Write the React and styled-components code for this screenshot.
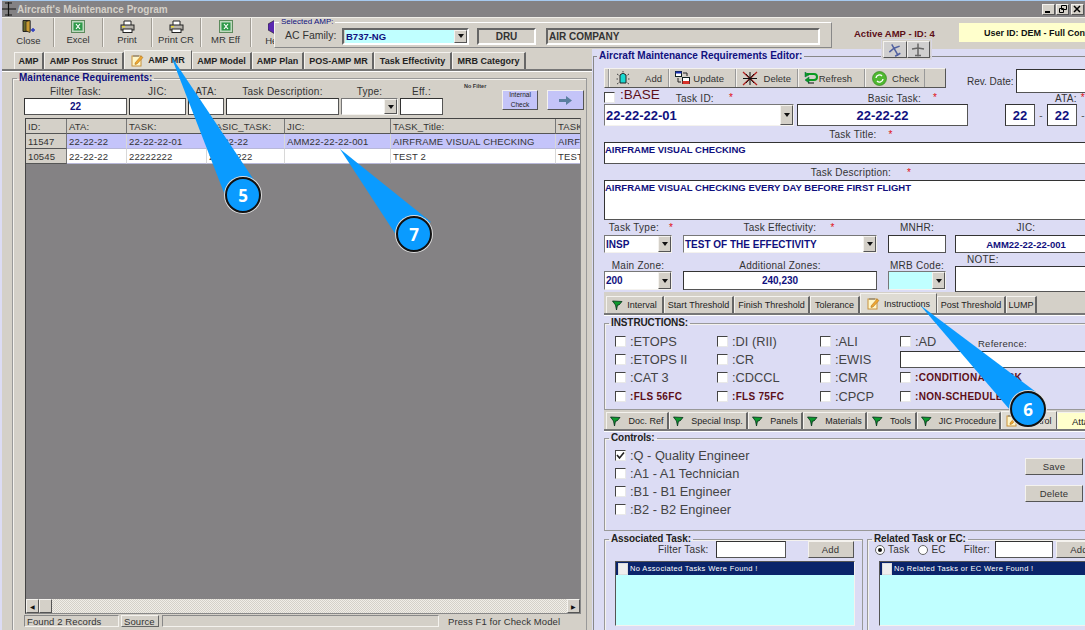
import React from "react";
import styled, { createGlobalStyle, css } from "styled-components";

const Global = createGlobalStyle`
  html, body { margin: 0; padding: 0; background: #d4d0c8; }
  * { box-sizing: border-box; }
  body { font-family: "Liberation Sans", Arial, sans-serif; font-size: 10px; color: #333; }
  fieldset { margin: 0; min-width: 0; }
  legend { padding: 0 2px; }
`;

const raised = css`
  border: 1px solid;
  border-color: #f4f2ee #555 #555 #f4f2ee;
`;
const NAVY = "#10107e";
const LAV = "#dcdcf4";
const MAROON = "#5c0f18";

const Screen = styled.div`
  position: relative; width: 1085px; height: 630px; overflow: hidden;
  background: #d4d0c8; border-left: 2px solid ${LAV};
`;
const TitleBar = styled.div`
  height: 17px; background: #848284; border-top: 1px solid #a6caf0;
  display: flex; align-items: center; padding: 0 0 0 1px; color: #d4d0c8;
  font-size: 10px; font-weight: bold; margin-left: -2px;
`;
const TitleText = styled.span` margin-left: 1px; flex: 1; `;
const WinBtn = styled.div`
  ${raised}; width: 13px; height: 11px; background: #d4d0c8; margin-right: 1.5px;
  display: flex; align-items: center; justify-content: center;
`;
const TopBar = styled.div`
  height: 32px; display: flex; border-top: 1px solid #f0eee8;
`;
const TopTools = styled.div` display: flex; padding-left: 2px; width: 272px; overflow: hidden; flex: none; `;
const ToolBtn = styled.div`
  flex: none; width: ${p => p.$w || 49}px; height: 29px; display: flex; flex-direction: column;
  align-items: center; justify-content: flex-start; padding-top: 2px; border-right: 1px solid #a09c94;
  box-shadow: 1px 0 0 #f4f2ee; font-size: 9.5px; color: #333; overflow: hidden;
  span { margin-top: 1px; white-space: nowrap; }
`;
const AmpGroup = styled.fieldset`
  width: 558px; height: 30px; margin-top: 0; flex: none; border: 1px solid #f4f2ee;
  border-top: 1px solid #fff; border-right: 1px solid #888; border-bottom: 1px solid #888;
  padding: 0 0 0 10px; display: flex; align-items: center; position: relative; 
  legend { color: ${NAVY}; font-size: 8px; line-height: 8px; margin-left: -6px; }
`;
const AmpLabel = styled.span` font-size: 10.5px; width: 57px; flex: none; margin-top: -3px; `;
const SunkenBox = styled.div`
  height: 17px; border: 2px solid; border-color: #666 #fff #fff #666; flex: none; margin-top:-1px;
  display: flex; align-items: center; font-size: 10px; font-weight: bold; color: #333;
  width: ${p => p.$w}px; margin-left: ${p => p.$ml || 0}px;
  justify-content: ${p => (p.$center ? "center" : "flex-start")}; padding-left: ${p => (p.$center ? 0 : 1)}px;
`;
const ComboValue = styled.div`
  flex: 1; height: 100%; background: ${p => p.$bg || "#fff"}; color: ${p => p.$c || NAVY};
  font-weight: bold; font-size: ${p => p.$fs || 10}px; display: flex; align-items: center; padding-left: 1px;
  white-space: nowrap; overflow: hidden;
`;
const DropBtn = styled.div`
  ${raised}; width: 13px; height: 100%; background: #d4d0c8; flex: none; position: relative;
  &::after { content: ""; position: absolute; left: 3px; top: 50%; margin-top: -2px;
    border: 3px solid transparent; border-top: 4px solid #111; border-bottom: 0; }
`;
const TopRight = styled.div`
  flex: 1; display: flex; align-items: center; padding-bottom: 1px; font-weight: bold;
`;
const ActiveAmp = styled.div` margin-left: 22px; width: 105px; color: ${MAROON}; font-size: 9.5px; white-space: nowrap; `;
const UserBox = styled.div`
  background: #ffffcc; height: 19px; width: 130px; display: flex; align-items: center; padding-left: 25px;
  white-space: nowrap; overflow: hidden; font-size: 9px; color: #111; margin-top:-1px;
`;
const Body = styled.div` display: flex; height: 581px; `;
const LeftPane = styled.div` width: 590px; flex: none; padding-top: 3px; overflow: hidden; `;
const RightPane = styled.div` flex: 1; background: ${LAV}; overflow: hidden; padding: 1px 0 0 1px; min-width: 0; `;
const TabStrip = styled.div`
  display: flex; align-items: flex-end; height: ${p => p.$h || 20}px; padding-left: ${p => p.$pl || 0}px;
  border-bottom: 2px solid #777; box-shadow: 0 1px 0 #fff; width: ${p => p.$w || "auto"};
  background: ${p => p.$bg || "transparent"}; white-space: nowrap;
`;
const Tab = styled.div`
  flex: none; width: ${p => p.$w}px; height: ${p => (p.$active ? p.$ah || 19 : 17)}px; background: ${p => (p.$active ? "#dedbd3" : "#d4d0c8")};
  border-right: 2px solid #666; border-left: 1px solid #f4f2ee; border-top: 1px solid #f4f2ee;
  display: flex; align-items: center; justify-content: center; gap: ${p => p.$gap || 4}px; overflow: hidden;
  font-size: ${p => p.$fs || 9.5}px; font-weight: ${p => (p.$bold ? "bold" : "normal")}; color: #222;
  ${p => p.$hl && css` background: #ffffcc; justify-content: flex-start; padding-left: 14px; border-right: 0;`}
  ${p => p.$active && css` border-right: 1px solid #666; `}
`;
const LeftGroup = styled.fieldset`
  margin: 1px 0 0 10px; width: 575px; height: 560px; border: 1px solid #999; box-shadow: inset 1px 1px 0 #f4f2ee;
  padding: 0 0 0 11px; border-bottom: 0;
  legend { color: ${NAVY}; font-weight: bold; font-size: 10px; line-height: 12px; margin-left: -7px; }
`;
const FilterRow = styled.div` display: flex; gap: 2px; position: relative; height: 31px; margin-top: 1px; `;
const Field = styled.div`
  display: flex; flex-direction: column; width: ${p => p.$w}px; flex: none; margin-left: ${p => p.$ml || 0}px;
  margin-top: ${p => p.$mt || 0}px;
`;
const Label = styled.div`
  height: ${p => p.$h || 13}px; display: flex; justify-content: center; align-items: center; gap: ${p => p.$gap || 10}px;
  font-size: 10px; letter-spacing: .25px; color: #333; white-space: nowrap; padding-left: ${p => p.$pl || 0}px;
  padding-top: ${p => p.$pt || 0}px; width: ${p => (p.$w ? `${p.$w}px` : "auto")};
`;
const NoteLabel = styled(Label)` justify-content: flex-start; padding-left: 12px; `;
const Star = styled.i` color: #e01010; font-style: normal; font-size: 10px; `;
const Input = styled.div`
  height: ${p => p.$h || 17}px; background: ${p => p.$bg || "#fff"}; border: 1px solid #333;
  border-right-color: #555; border-bottom-color: #555; color: ${NAVY};
  display: flex; align-items: ${p => (p.$top ? "flex-start" : "center")}; justify-content: ${p => (p.$left ? "flex-start" : "center")};
  font-weight: bold; font-size: ${p => p.$fs || 10}px; padding: ${p => (p.$left ? "1px 0" : "0")}; white-space: nowrap; overflow: hidden;
  width: ${p => (p.$w ? `${p.$w}px` : "auto")}; flex: none; margin-left: ${p => p.$ml || 0}px;
`;
const Combo = styled.div`
  height: ${p => p.$h || 18}px; display: flex; border: 1px solid; border-color: #777 #f4f2ee #f4f2ee #777;
`;
const TaskCombo = styled(Combo)` width: 190px; flex: none; height: 22px; `;
const SmallHint = styled.div` position: absolute; left: 440px; top: -2px; font-size: 5.5px; font-weight: bold; color: #333; `;
const LavBtn = styled.div`
  ${raised}; position: absolute; top: ${p => p.$t || 0}px; left: ${p => p.$l}px; width: ${p => p.$w}px; height: 20px; background: #c4c4f8;
  display: flex; align-items: center; justify-content: center; text-align: center; font-size: 6.5px; line-height: 10px; color: #222;
`;
const DataGrid = styled.div`
  margin: 2px 0 0 1px; width: 556px; height: 496px; border: 1px solid #888; background: #848284; display: flex; flex-direction: column; overflow: hidden;
  border-left: 1px solid #444; border-top: 1px solid #444;
`;
const COLS = "41px 60px 80px 78px 106px 165px 26px";
const GridRow = styled.div`
  display: grid; grid-template-columns: ${COLS}; height: 15px; flex: none; overflow: hidden;
`;
const Cell = styled.div`
  padding: 0 2px; display: flex; align-items: center; white-space: nowrap; overflow: hidden; font-size: 9.5px; letter-spacing: .15px; color: #333;
  background: ${p => (p.$head ? "#d4d0c8" : p.$sel ? "#c4c4fa" : "#fff")};
  border-right: 1px solid ${p => (p.$head ? "#777" : "#d8d8d8")}; border-bottom: 1px solid ${p => (p.$head ? "#555" : "#b8b8d8")};
`;
const Spacer = styled.div` flex: 1; `;
const HScroll = styled.div`
  height: 14px; background: repeating-conic-gradient(#d4d0c8 0 25%, #f0eee8 0 50%) 0 0 / 2px 2px; display: flex; justify-content: space-between; flex: none;
`;
const ScrollBtn = styled.div`
  ${raised}; width: ${p => p.$w || 13}px; height: 14px; background: #d4d0c8; display: flex; align-items: center; justify-content: center; font-size: 6px; color: #111;
`;
const ScrollLeft = styled.div` display: flex; `;
const StatusBar = styled.div` display: flex; height: 12px; margin-top: 1px; font-size: 9.5px; letter-spacing: .1px; align-items: stretch; `;
const StatusCell = styled.div`
  width: ${p => p.$w}px; margin-right: ${p => p.$mr || 2}px; display: flex; align-items: center; padding-left: 2px; white-space: nowrap; flex: none; 
  border: 1px solid; ${p => (p.$up ? "border-color: #f4f2ee #666 #666 #f4f2ee;" : p.$none ? "border-color: transparent;" : "border-color: #888 #f4f2ee #f4f2ee #888;")}
`;
const EditorGroup = styled.fieldset`
  width: 540px; border: 0; border-top: 1px solid #888; border-left: 1px solid #888; padding: 0; height: 580px;
  legend { color: ${NAVY}; font-weight: bold; font-size: 10px; line-height: 12px; margin-left: 3px; }
`;
const EditorBody = styled.div` padding-left: 10px; `;
const EditBar = styled.div` display: flex; height: 22px; margin-top: 6px; `;
const EditTools = styled.div`
  ${raised}; width: 342px; height: 20px; background: #d4d0c8; display: flex; align-items: center; font-size: 9.5px; color: #333; flex: none; padding-left: 3px;
`;
const EditTool = styled.div`
  flex: none; width: ${p => p.$w}px; margin-left: ${p => p.$ml || 0}px; height: 100%; display: flex; align-items: center; justify-content: space-between;
  padding: 0 ${p => p.$pr || 6}px 0 ${p => p.$pl || 6}px;
  border-left: 1px solid #999; box-shadow: inset 1px 0 0 #f4f2ee; 
  &:last-child { border-right: 1px solid #999; }
`;
const RevLabel = styled.div` margin-left: 21px; width: 49px; flex: none; padding-top: 8px; font-size: 10px; `;
const RevInput = styled(Input)` width: 90px; height: 24px; margin-top: 1px; `;
const BaseRow = styled.div` display: grid; grid-template-columns: 193px 171px 38px 80px; height: 14px; align-items: start; `;
const BaseCell = styled.div` display: flex; align-items: center; height: 14px; white-space: nowrap; `;
const CenteredCell = styled(BaseCell)` justify-content: center; padding-left: ${p => p.$pl || 0}px; `;
const Check = styled.div`
  width: 11px; height: 11px; flex: none; background: #fff; border: 1px solid; border-color: #444 #e8e8e8 #e8e8e8 #444;
  display: flex; align-items: center; justify-content: center; margin-right: ${p => p.$mr ?? 4}px;
`;
const BaseText = styled.span` color: ${MAROON}; font-size: 13.5px; margin-top: -5px; margin-left: 1px; `;
const Tl = styled.span` font-size: 10px; letter-spacing: .25px; color: #333; margin-left: ${p => p.$ml || 0}px; margin-top: ${p => p.$mt || 0}px;`;
const TaskRow = styled.div` display: flex; height: 22px; align-items: flex-start; `;
const Dash = styled.span` width: 12px; text-align: center; flex: none; color: #555; padding-top: 6px; `;
const FormGrid = styled.div` display: grid; grid-template-columns: 68px 194px 58px 140px; column-gap: 11px; `;
const WideField = styled(Field)` margin-left: -2px; width: 142px; `;
const Section = styled.fieldset`
  width: ${p => p.$w || 500}px; height: ${p => p.$h}px; margin-top: ${p => p.$mt || 0}px; border: 1px solid #999; box-shadow: inset 1px 1px 0 #f4f2ee; padding: 0;
  position: relative; flex: none;
  legend { font-weight: bold; font-size: 10px; line-height: 12px; letter-spacing: -.1px; color: #222; margin-left: 4px; }
`;
const CheckGrid = styled.div`
  display: grid; grid-template-columns: 102px 103px 80px 185px; grid-auto-rows: 18.4px; padding: 3px 0 0 10px; align-items: center;
`;
const CheckItem = styled.div`
  display: flex; align-items: center; white-space: nowrap; font-size: ${p => (p.$alert ? 10 : 12.8)}px; color: ${p => (p.$alert ? MAROON : "#444")};
  font-weight: ${p => (p.$alert ? "bold" : "normal")}; letter-spacing: ${p => (p.$alert ? ".3px" : "0")};
`;
const RefCell = styled.div` position: absolute; left: 295px; top: 9px; width: 190px; `;
const RefLabel = styled.div` margin-left: 78px; font-size: 9.5px; height: 13px; letter-spacing: .25px; `;
const ControlsBody = styled.div` display: flex; justify-content: space-between; width: 479px; padding: 2px 3px 0 10px; `;
const ControlsList = styled.div` display: flex; flex-direction: column; gap: 0; `;
const ControlItem = styled(CheckItem)` height: 18px; `;
const ControlBtns = styled.div` display: flex; flex-direction: column; gap: 10px; padding-top: 12px; margin-right: -2px; `;
const PlainBtn = styled.div`
  ${raised}; width: ${p => p.$w || 58}px; height: 17px; background: #d4d0c8; display: flex; align-items: center; justify-content: center; flex: none; font-size: 9.5px;
  margin-left: ${p => p.$ml || 0}px; letter-spacing: .2px;
`;
const BottomRow = styled.div` display: flex; gap: 4px; margin-top: 2px; `;
const AssocTop = styled.div` display: flex; align-items: center; height: 19px; padding-left: ${p => p.$pl || 0}px; margin: -5px 0 2px; `;
const ListBox = styled.div`
  margin: 0 0 0 ${p => p.$ml || 10}px; width: ${p => p.$w}px; height: 65px; background: #c0ffff; border: 1px solid; border-color: #555 #f4f2ee #f4f2ee #555; flex: none;
`;
const ListHead = styled.div`
  height: 13px; background: #0a246a; color: #fff; display: flex; align-items: center; font-size: 7.5px; letter-spacing: .35px; white-space: nowrap; 
`;
const ListCheck = styled(Check)` width: 10px; height: 12px; margin: 0 2px 0 2px; border-color: #ddd; background: #eee; `;
const Radio = styled.div`
  width: 10px; height: 10px; border-radius: 50%; border: 1px solid #666; background: #fff; flex: none; margin-right: 3px; margin-left: ${p => p.$ml || 0}px;
  display: flex; align-items: center; justify-content: center;
  &::after { content: ""; width: 4px; height: 4px; border-radius: 50%; background: ${p => (p.$on ? "#111" : "transparent")}; }
`;
const SmallText = styled.span` font-size: 10px; letter-spacing: .2px; margin-left: ${p => p.$ml || 0}px; color: #333; white-space: nowrap; `;
const FloatTools = styled.div`
  position: absolute; left: 879px; top: 39px; width: 51px; height: 21px; background: rgba(212,208,200,.72); border: 1px solid #d8d6e4; display: flex; padding: 1px;
`;
const FloatBtn = styled.div` ${raised}; flex: 1; display: flex; align-items: center; justify-content: center; background: #d0cfcf; `;
const TailLayer = styled.svg` position: absolute; left: -2px; top: 0; pointer-events: none; `;
const Badge = styled.div`
  position: absolute; left: ${p => p.$x - 18 - 2}px; top: ${p => p.$y - 18}px; width: 36px; height: 36px; border-radius: 50%;
  background: #0a9bff; border: 2px solid #111; box-shadow: 0 0 0 1px #ddd; color: #fff; font-size: 17px; font-weight: bold;
  font-family: "Open Sans", "Liberation Sans", sans-serif; display: flex; align-items: center; justify-content: center;
`;

const Flag = () => (
  <svg width="11" height="11" viewBox="0 0 11 11"><path d="M0.5 1 L10 1.5 L7 5 L5.5 5 L4.5 10 L3.5 5 Z" fill="#0d9a2e" stroke="#05301a" strokeWidth=".8" /></svg>
);
const Note = () => (
  <svg width="13" height="13" viewBox="0 0 13 13">
    <rect x="1" y="2" width="9" height="10" fill="#fff6c8" stroke="#c8923c" />
    <path d="M3 1v2M5 1v2M7 1v2" stroke="#777" />
    <path d="M4 9 L10 2 L12 3.5 L6 10 L4 10.5 Z" fill="#f0a830" stroke="#a06a20" strokeWidth=".5" />
  </svg>
);
const XlsIcon = () => (
  <svg width="14" height="13" viewBox="0 0 14 13">
    <rect x=".5" y=".5" width="13" height="12" fill="#bfd8bf" stroke="#5c8a5c" />
    <rect x="2.5" y="2.5" width="9" height="8" fill="#2f9a4a" />
    <path d="M5 4l4 5M9 4l-4 5" stroke="#fff" strokeWidth="1.2" />
  </svg>
);
const PrintIcon = () => (
  <svg width="15" height="13" viewBox="0 0 15 13">
    <path d="M4 5V1h7v4" fill="#fff" stroke="#222" />
    <rect x="1" y="5" width="13" height="5" fill="#b8b4ac" stroke="#222" />
    <rect x="3" y="9" width="9" height="3.5" fill="#fff" stroke="#222" />
    <rect x="2" y="6" width="3" height="1.5" fill="#e8d838" />
  </svg>
);
const DoorIcon = () => (
  <svg width="16" height="14" viewBox="0 0 16 14">
    <path d="M2 0.5h7v11H2z" fill="#6a6a2a" stroke="#222" />
    <path d="M5 1.5l4-1v12l-4-1.5z" fill="#c89a30" stroke="#222" strokeWidth=".7" />
    <path d="M10 10h4M12 8v4" stroke="#2a3ac0" strokeWidth="1.4" />
  </svg>
);
const Book = () => (
  <svg width="14" height="14" viewBox="0 0 14 14"><path d="M7 0l7 4v6l-7 4-7-4V4z" fill="#5a28b0" stroke="#222" strokeWidth=".6" /><rect x="6" y="2" width="3" height="3" fill="#f0d030" /></svg>
);
const AddIcon = () => (
  <svg width="16" height="15" viewBox="0 0 16 15">
    <path d="M5 4 L8 2 L11 4 V12 H5 Z" fill="#18d8d0" stroke="#222" />
    <path d="M2 3l1.5 1M14 3l-1.5 1M1.5 8H3M14.5 8H13M2 13l1.5-1M14 13l-1.5-1M8 0v1" stroke="#444" />
  </svg>
);
const UpdateIcon = () => (
  <svg width="16" height="14" viewBox="0 0 16 14">
    <rect x="0.5" y="0.5" width="6" height="5" fill="#fff" stroke="#122" />
    <rect x="0.5" y="0.5" width="6" height="2" fill="#1a30b0" />
    <rect x="7.5" y="6.5" width="7" height="6" fill="#fff" stroke="#122" />
    <rect x="7.5" y="10" width="7" height="3" fill="#d83028" />
    <path d="M8 2h4v3M3 7v4h3" fill="none" stroke="#222" />
  </svg>
);
const DeleteIcon = () => (
  <svg width="16" height="15" viewBox="0 0 16 15">
    <path d="M1 1l14 13M15 1L1 14" stroke="#b02020" strokeWidth="1.3" />
    <path d="M8 1v13M1 7.5h14M4 3l8 9M12 3l-8 9" stroke="#111" strokeWidth="1" />
  </svg>
);
const RefreshIcon = () => (
  <svg width="14" height="13" viewBox="0 0 14 13">
    <path d="M3 2h7q3 0 3 3t-3 3H5" fill="none" stroke="#0a9a20" strokeWidth="2" />
    <path d="M5 5v6L1 8z M1 0l4 3-4 2z" fill="#0a9a20" stroke="#064" strokeWidth=".5" />
    <path d="M4 11h6" stroke="#111" strokeWidth="1" />
  </svg>
);
const CheckIcon = () => (
  <svg width="15" height="15" viewBox="0 0 15 15">
    <circle cx="7.5" cy="7.5" r="7" fill="#50b830" stroke="#2a7a18" strokeWidth=".6" />
    <path d="M4 7a3.5 3.5 0 0 1 6-2M11 8a3.5 3.5 0 0 1-6 2" fill="none" stroke="#fff" strokeWidth="1.4" />
  </svg>
);
const PlaneIcon = ({ tilt }) => (
  <svg width="16" height="14" viewBox="0 0 16 14" style={{ transform: tilt ? "rotate(-30deg)" : "none" }}>
    <path d="M8 0.5v13M2 6l6-1 6 1M5 12.5h6" fill="none" stroke={tilt ? "#5060a0" : "#666"} strokeWidth="1.5" />
  </svg>
);
const Tick = () => (
  <svg width="9" height="9" viewBox="0 0 9 9"><path d="M1 4l2.5 3L8 1.5" fill="none" stroke="#222" strokeWidth="1.6" /></svg>
);
const ArrowIcon = () => (
  <svg width="14" height="9" viewBox="0 0 14 9"><path d="M0 3h7V0l6 4.5L7 9V6H0z" fill="#5a7f9f" /></svg>
);

const rows = [
  { sel: true, cells: ["11547", "22-22-22", "22-22-22-01", "22-22-22", "AMM22-22-22-001", "AIRFRAME VISUAL CHECKING", "AIRF"] },
  { cells: ["10545", "22-22-22", "22222222", "22222222", "", "TEST 2", "TEST"] },
];
const heads = ["ID:", "ATA:", "TASK:", "BASIC_TASK:", "JIC:", "TASK_Title:", "TASK"];

const leftTabs = [
  ["AMP", 30], ["AMP Pos Struct", 80], ["AMP MR", 68, true], ["AMP Model", 60], ["AMP Plan", 52], ["POS-AMP MR", 70], ["Task Effectivity", 78], ["MRB Category", 74],
];
const tabs1 = [
  ["Interval", 58, "flag"], ["Start Threshold", 70], ["Finish Threshold", 76], ["Tolerance", 50], ["Instructions", 77, "note"], ["Post Threshold", 69], ["LUMP", 31],
];
const tabs2 = [
  ["Doc. Ref", 63], ["Special Insp.", 79], ["Panels", 55], ["Materials", 64], ["Tools", 50], ["JIC Procedure", 84],
];
const instr = [
  [":ETOPS", ":DI (RII)", ":ALI", ":AD"],
  [":ETOPS II", ":CR", ":EWIS", null],
  [":CAT 3", ":CDCCL", ":CMR", "!:CONDITIONAL TASK"],
  ["!:FLS 56FC", "!:FLS 75FC", ":CPCP", "!:NON-SCHEDULED"],
];
const controls = [[":Q - Quality Engineer", true], [":A1 - A1 Technician"], [":B1 - B1 Engineer"], [":B2 - B2 Engineer"]];

export default function App() {
  return (
    <Screen>
      <Global />
      <TitleBar>
        <svg width="15" height="14" viewBox="0 0 15 14"><path d="M7.5 0v14M0 7h15M4 13h7M4 1h7" stroke="#111" strokeWidth="1.2" fill="none" /></svg>
        <TitleText>Aircraft's Maintenance Program</TitleText>
        <WinBtn><svg width="7" height="7"><path d="M0 6h5" stroke="#000" strokeWidth="2" /></svg></WinBtn>
        <WinBtn><svg width="8" height="8"><path d="M2.5.5h5v4h-5zM.5 3.5h4v4h-4z" stroke="#000" fill="#d4d0c8" /></svg></WinBtn>
        <WinBtn><svg width="8" height="8"><path d="M1 1l6 6M7 1l-6 6" stroke="#000" strokeWidth="1.5" /></svg></WinBtn>
      </TitleBar>
      <TopBar>
        <TopTools>
          <ToolBtn $w={50}><DoorIcon /><span>Close</span></ToolBtn>
          <ToolBtn><XlsIcon /><span>Excel</span></ToolBtn>
          <ToolBtn><PrintIcon /><span>Print</span></ToolBtn>
          <ToolBtn><PrintIcon /><span>Print CR</span></ToolBtn>
          <ToolBtn $w={50}><XlsIcon /><span>MR Eff</span></ToolBtn>
          <ToolBtn><Book /><span>Help</span></ToolBtn>
        </TopTools>
        <AmpGroup>
          <legend>Selected AMP:</legend>
          <AmpLabel>AC Family:</AmpLabel>
          <SunkenBox $w={127}>
            <ComboValue $bg="#c0ffff" $fs={9.5}>B737-NG</ComboValue>
            <DropBtn />
          </SunkenBox>
          <SunkenBox $w={59} $ml={8} $center>DRU</SunkenBox>
          <SunkenBox $w={274} $ml={10}>AIR COMPANY</SunkenBox>
        </AmpGroup>
        <TopRight>
          <ActiveAmp>Active AMP - ID: 4</ActiveAmp>
          <UserBox>User ID: DEM - Full Control</UserBox>
        </TopRight>
      </TopBar>

      <Body>
        <LeftPane>
          <TabStrip $pl={12} $h={19}>
            {leftTabs.map(([t, w, a]) => (
              <Tab key={t} $w={w} $active={a} $bold $fs={9}>
                {a && <Note />}{t}
              </Tab>
            ))}
          </TabStrip>
          <LeftGroup>
            <legend>Maintenance Requirements:</legend>
            <FilterRow>
              <Field $w={103}><Label>Filter Task:</Label><Input>22</Input></Field>
              <Field $w={57}><Label>JIC:</Label><Input /></Field>
              <Field $w={36}><Label>ATA:</Label><Input /></Field>
              <Field $w={113}><Label>Task Description:</Label><Input /></Field>
              <Field $w={57}><Label>Type:</Label><Combo $h={17}><ComboValue /><DropBtn /></Combo></Field>
              <Field $w={43}><Label>Eff.:</Label><Input /></Field>
              <SmallHint>No Filter</SmallHint>
              <LavBtn $l={478} $t={5} $w={36}>Internal<br />Check</LavBtn>
              <LavBtn $l={523} $t={5} $w={37}><ArrowIcon /></LavBtn>
            </FilterRow>
            <DataGrid>
              <GridRow>{heads.map(h => <Cell key={h} $head>{h}</Cell>)}</GridRow>
              {rows.map(r => (
                <GridRow key={r.cells[0]}>
                  {r.cells.map((c, i) => (i === 0
                    ? <Cell key={i} $head>{c}</Cell>
                    : <Cell key={i} $sel={r.sel}>{c}</Cell>))}
                </GridRow>
              ))}
              <Spacer />
              <HScroll>
                <ScrollLeft><ScrollBtn>◀</ScrollBtn><ScrollBtn /></ScrollLeft>
                <ScrollBtn>▶</ScrollBtn>
              </HScroll>
            </DataGrid>
            <StatusBar>
              <StatusCell $w={95}>Found 2 Records</StatusCell>
              <StatusCell $w={38} $up $mr={3}>Source</StatusCell>
              <StatusCell $w={277} $mr={6} />
              <StatusCell $w={120} $none>Press F1 for Check Model</StatusCell>
            </StatusBar>
          </LeftGroup>
        </LeftPane>

        <RightPane>
          <EditorGroup>
            <legend>Aircraft Maintenance Requirements Editor:</legend>
            <EditorBody>
              <EditBar>
                <EditTools>
                  <EditTool $w={60}><AddIcon />Add</EditTool>
                  <EditTool $w={67} $pr={11}><UpdateIcon />Update</EditTool>
                  <EditTool $w={62}><DeleteIcon />Delete</EditTool>
                  <EditTool $w={61}><RefreshIcon />Refresh</EditTool>
                  <EditTool $w={61} $ml={6} $pl={7} $pr={5}><CheckIcon />Check</EditTool>
                </EditTools>
                <RevLabel>Rev. Date:</RevLabel>
                <RevInput />
              </EditBar>
              <BaseRow>
                <BaseCell><Check /><BaseText>:BASE</BaseText><Tl $ml={16} $mt={2}>Task ID:</Tl><Tl $ml={15}><Star>*</Star></Tl></BaseCell>
                <CenteredCell $pl={40}><Tl $mt={2}>Basic Task:</Tl><Tl $ml={12}><Star>*</Star></Tl></CenteredCell>
                <BaseCell />
                <CenteredCell $pl={48}><Tl $mt={2}>ATA:</Tl><Tl $ml={4}><Star>*</Star></Tl></CenteredCell>
              </BaseRow>
              <TaskRow>
                <TaskCombo>
                  <ComboValue $fs={13}>22-22-22-01</ComboValue><DropBtn />
                </TaskCombo>
                <Input $w={171} $h={22} $fs={13} $ml={3}>22-22-22</Input>
                <Input $w={30} $h={22} $fs={13} $ml={37}>22</Input>
                <Dash>-</Dash>
                <Input $w={30} $h={22} $fs={13}>22</Input>
                <Dash>-</Dash>
              </TaskRow>
              <Label $h={16} $gap={12} $w={514}>Task Title: <Star>*</Star></Label>
              <Input $left $top $w={490} $h={22} $fs={9.5}>AIRFRAME VISUAL CHECKING</Input>
              <Label $h={16} $gap={16} $w={514}>Task Description: <Star>*</Star></Label>
              <Input $left $top $w={490} $h={40} $fs={9.5}>AIRFRAME VISUAL CHECKING EVERY DAY BEFORE FIRST FLIGHT</Input>
              <FormGrid>
                <Field><Label $h={15} $pl={6}>Task Type: <Star>*</Star></Label><Combo><ComboValue>INSP</ComboValue><DropBtn /></Combo></Field>
                <Field><Label $h={15} $gap={14} $pl={18}>Task Effectivity: <Star>*</Star></Label><Combo><ComboValue>TEST OF THE EFFECTIVITY</ComboValue><DropBtn /></Combo></Field>
                <Field><Label $h={15}>MNHR:</Label><Input $h={18} /></Field>
                <WideField><Label $h={15}>JIC:</Label><Input $h={18} $fs={9.5}>AMM22-22-22-001</Input></WideField>
              </FormGrid>
              <FormGrid>
                <Field><Label $h={18} $pt={6}>Main Zone:</Label><Combo $h={19}><ComboValue>200</ComboValue><DropBtn /></Combo></Field>
                <Field><Label $h={18} $pt={6}>Additional Zones:</Label><Input $h={19}>240,230</Input></Field>
                <Field><Label $h={18} $pt={6}>MRB Code:</Label><Combo $h={19}><ComboValue $bg="#c0ffff" /><DropBtn /></Combo></Field>
                <WideField><NoteLabel $h={13}>NOTE:</NoteLabel><Input $h={26} /></WideField>
              </FormGrid>
              <TabStrip $h={23} $pl={2} $w="500px" $bg="#d4d0c8">
                {tabs1.map(([t, w, ic]) => (
                  <Tab key={t} $w={w} $active={ic === "note"} $ah={20} $fs={9}>
                    {ic === "flag" && <Flag />}{ic === "note" && <Note />}{t}
                  </Tab>
                ))}
              </TabStrip>
              <Section $h={93} $mt={2}>
                <legend>INSTRUCTIONS:</legend>
                <CheckGrid>
                  {instr.flat().map((t, i) => (t === null
                    ? <span key={i} />
                    : <CheckItem key={i} $alert={t[0] === "!"}><Check />{t.replace("!", "")}</CheckItem>))}
                </CheckGrid>
                <RefCell>
                  <RefLabel>Reference:</RefLabel>
                  <Input $h={17} />
                </RefCell>
              </Section>
              <TabStrip $h={21} $pl={2} $w="500px" $bg="#d4d0c8">
                {tabs2.map(([t, w]) => (
                  <Tab key={t} $w={w} $fs={9} $gap={7}><Flag />{t}</Tab>
                ))}
                <Tab $w={56} $fs={9} $active $ah={18} $gap={3}><Note />Control</Tab>
                <Tab $w={30} $hl $fs={9.5}>Attach</Tab>
              </TabStrip>
              <Section $h={99} $mt={1}>
                <legend>Controls:</legend>
                <ControlsBody>
                  <ControlsList>
                    {controls.map(([t, c]) => (
                      <ControlItem key={t}><Check>{c && <Tick />}</Check>{t}</ControlItem>
                    ))}
                  </ControlsList>
                  <ControlBtns>
                    <PlainBtn>Save</PlainBtn>
                    <PlainBtn>Delete</PlainBtn>
                  </ControlBtns>
                </ControlsBody>
              </Section>
              <BottomRow>
                <Section $w={259} $h={100}>
                  <legend>Associated Task:</legend>
                  <AssocTop $pl={53}>
                    <SmallText>Filter Task:</SmallText>
                    <Input $w={70} $h={17} $ml={7} />
                    <PlainBtn $w={46} $ml={22}>Add</PlainBtn>
                  </AssocTop>
                  <ListBox $w={240}>
                    <ListHead><ListCheck />No Associated Tasks Were Found !</ListHead>
                  </ListBox>
                </Section>
                <Section $w={240} $h={100}>
                  <legend>Related Task or EC:</legend>
                  <AssocTop $pl={7}>
                    <Radio $on /><SmallText>Task</SmallText>
                    <Radio $ml={9} /><SmallText>EC</SmallText>
                    <SmallText $ml={18}>Filter:</SmallText>
                    <Input $w={58} $h={17} $ml={5} />
                    <PlainBtn $w={46} $ml={3}>Add</PlainBtn>
                  </AssocTop>
                  <ListBox $w={225} $ml={11}>
                    <ListHead><ListCheck />No Related Tasks or EC Were Found !</ListHead>
                  </ListBox>
                </Section>
              </BottomRow>
            </EditorBody>
          </EditorGroup>
        </RightPane>
      </Body>

      <FloatTools>
        <FloatBtn><PlaneIcon tilt /></FloatBtn>
        <FloatBtn><PlaneIcon /></FloatBtn>
      </FloatTools>

      <TailLayer width="1085" height="630" viewBox="0 0 1085 630">
        <polygon points="171,56 226,198 258,186" fill="#0a9bff" />
        <polygon points="340,149 398,238 431,222" fill="#0a9bff" />
        <polygon points="920,305 1010,410 1036,392" fill="#0a9bff" />
      </TailLayer>
      <Badge $x={243} $y={195}>5</Badge>
      <Badge $x={414} $y={234}>7</Badge>
      <Badge $x={1028} $y={409}>6</Badge>
    </Screen>
  );
}
